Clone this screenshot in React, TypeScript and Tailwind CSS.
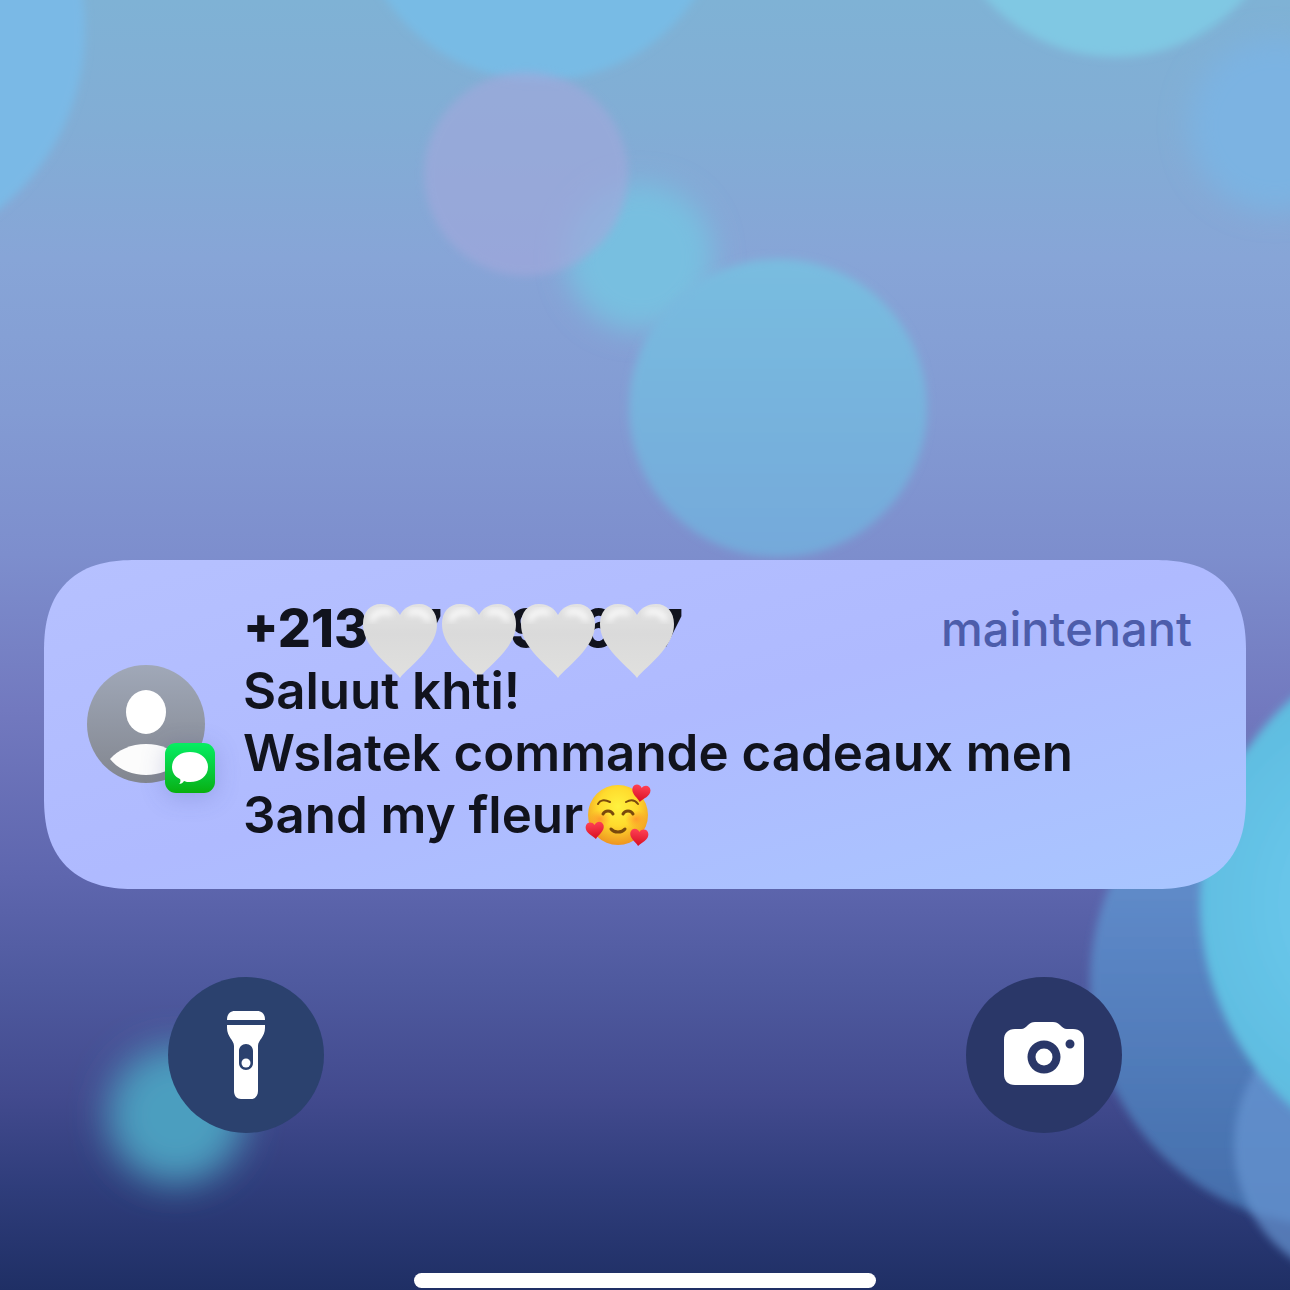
import React from 'react';

function Wallpaper() {
  return (
    <svg
      className="absolute inset-0 h-full w-full"
      viewBox="0 0 1290 1290"
      preserveAspectRatio="xMidYMid slice"
      aria-hidden="true"
    >
      <defs>
        <linearGradient id="sky" x1="0" y1="0" x2="0" y2="1">
          <stop offset="0" stopColor="#7fb2d5" />
          <stop offset="0.1" stopColor="#82add5" />
          <stop offset="0.2" stopColor="#87a5d7" />
          <stop offset="0.32" stopColor="#839bd3" />
          <stop offset="0.43" stopColor="#7d8ecd" />
          <stop offset="0.55" stopColor="#7279bf" />
          <stop offset="0.68" stopColor="#5e66ae" />
          <stop offset="0.76" stopColor="#4f5a9f" />
          <stop offset="0.85" stopColor="#424a8e" />
          <stop offset="0.92" stopColor="#2f3d7b" />
          <stop offset="1" stopColor="#1f2f65" />
        </linearGradient>
        <linearGradient id="blob" x1="0" y1="0" x2="0" y2="1">
          <stop offset="0" stopColor="#79bde0" />
          <stop offset="1" stopColor="#75a9da" />
        </linearGradient>
        <linearGradient id="deep" x1="0" y1="0" x2="0" y2="1">
          <stop offset="0" stopColor="#6b9bd4" />
          <stop offset="0.4" stopColor="#5b86c5" />
          <stop offset="1" stopColor="#436daa" />
        </linearGradient>
        <radialGradient id="aqua" cx="0.38" cy="0.5" r="0.5">
          <stop offset="0" stopColor="#69c8ed" />
          <stop offset="0.4" stopColor="#68c6ea" />
          <stop offset="1" stopColor="#5cb9dc" />
        </radialGradient>
        <filter id="soft4" x="-20%" y="-20%" width="140%" height="140%">
          <feGaussianBlur stdDeviation="4" />
        </filter>
        <filter id="soft14" x="-40%" y="-40%" width="180%" height="180%">
          <feGaussianBlur stdDeviation="14" />
        </filter>
        <filter id="soft18" x="-50%" y="-50%" width="200%" height="200%">
          <feGaussianBlur stdDeviation="18" />
        </filter>
      </defs>
      <rect width="1290" height="1290" fill="url(#sky)" />
      <circle cx="-145" cy="30" r="230" fill="#7ab9e6" filter="url(#soft4)" />
      <circle cx="540" cy="-105" r="186" fill="#78bbe5" filter="url(#soft4)" />
      <circle cx="1115" cy="-115" r="172" fill="#80c8e3" filter="url(#soft4)" />
      <circle cx="1275" cy="125" r="86" fill="#7bb3e2" filter="url(#soft14)" />
      <circle cx="640" cy="257" r="74" fill="#78bfe0" filter="url(#soft14)" />
      <circle cx="526" cy="174" r="102" fill="#a2a8dc" opacity="0.64" filter="url(#soft4)" />
      <circle cx="778" cy="408" r="149" fill="url(#blob)" filter="url(#soft4)" />
      <circle cx="1334" cy="982" r="244" fill="url(#deep)" filter="url(#soft4)" />
      <circle cx="1374" cy="1145" r="140" fill="#6796d3" opacity="0.7" filter="url(#soft4)" />
      <circle cx="1474" cy="903" r="274" fill="url(#aqua)" filter="url(#soft4)" />
      <circle cx="176" cy="1115" r="68" fill="#4b9ebf" filter="url(#soft18)" />
    </svg>
  );
}

function WhiteHeart() {
  return (
    <svg viewBox="0 0 76 76" className="h-[76px] w-[76px] shrink-0" role="img" aria-label="white heart">
      <defs>
        <linearGradient id="heart" x1="0" y1="0" x2="0" y2="1">
          <stop offset="0" stopColor="#e2e2e2" />
          <stop offset="0.4" stopColor="#dadada" />
          <stop offset="1" stopColor="#e0e0de" />
        </linearGradient>
        <filter id="glow" x="-30%" y="-60%" width="160%" height="220%">
          <feGaussianBlur stdDeviation="3" />
        </filter>
      </defs>
      <path
        d="M38 75C34 69 22 60 13 49C5 39 1 31 1 21C1 9 8 1 19 1C28 1 34 5 38 12C42 5 48 1 57 1C68 1 75 9 75 21C75 31 71 39 63 49C54 60 42 69 38 75Z"
        fill="url(#heart)"
      />
      <path d="M10 16C13 9 22 7 28 10" fill="none" stroke="#fff" strokeWidth="5" strokeLinecap="round" filter="url(#glow)" />
      <path d="M48 10C54 7 63 9 66 16" fill="none" stroke="#fff" strokeWidth="5" strokeLinecap="round" filter="url(#glow)" />
    </svg>
  );
}

function SmilingHearts() {
  const heart = 'M0 9C-3 5-10 2-9-4C-8-9-2-9 0-5C2-9 8-9 9-4C10 2 3 5 0 9Z';
  return (
    <svg
      viewBox="0 0 66 64"
      className="ml-0.5 h-16 w-[66px]"
      role="img"
      aria-label="smiling face with hearts"
    >
      <defs>
        <radialGradient id="face" cx="0.5" cy="0.36" r="0.64">
          <stop offset="0" stopColor="#fff23f" />
          <stop offset="0.5" stopColor="#ffdb2d" />
          <stop offset="1" stopColor="#ee9420" />
        </radialGradient>
        <radialGradient id="blush">
          <stop offset="0" stopColor="#ff7a2c" stopOpacity="0.6" />
          <stop offset="1" stopColor="#ff8a2c" stopOpacity="0" />
        </radialGradient>
        <linearGradient id="red" x1="0" y1="0" x2="0" y2="1">
          <stop offset="0" stopColor="#ff4054" />
          <stop offset="1" stopColor="#d80f22" />
        </linearGradient>
      </defs>
      <circle cx="33" cy="32" r="30" fill="url(#face)" />
      <ellipse cx="15" cy="36" rx="11" ry="9" fill="url(#blush)" />
      <ellipse cx="51" cy="36" rx="11" ry="9" fill="url(#blush)" />
      <g fill="none" stroke="#7a4a0c" strokeLinecap="round">
        <path d="M13 21C15 17 19 16 25 19" strokeWidth="2" />
        <path d="M41 19C46 16 50 17 53 21" strokeWidth="2" />
        <path d="M18 31C20 27 26 27 28 31" strokeWidth="3" />
        <path d="M38 31C40 27 46 27 48 31" strokeWidth="3" />
        <path d="M26 46C29 50 37 50 40 46" strokeWidth="3" />
      </g>
      <path d={heart} transform="translate(56 10) rotate(8)" fill="url(#red)" />
      <path d={heart} transform="translate(10 47) rotate(-6)" fill="url(#red)" />
      <path d={heart} transform="translate(54 54) rotate(6)" fill="url(#red)" />
    </svg>
  );
}

function Avatar() {
  return (
    <div className="relative mt-1 h-[118px] w-[118px] shrink-0">
      <svg viewBox="0 0 118 118" className="h-full w-full" aria-hidden="true">
        <defs>
          <linearGradient id="disc" x1="0" y1="0" x2="0" y2="1">
            <stop offset="0" stopColor="#a0a8b8" />
            <stop offset="1" stopColor="#82868f" />
          </linearGradient>
        </defs>
        <circle cx="59" cy="59" r="59" fill="url(#disc)" />
        <ellipse cx="59" cy="47" rx="20" ry="22" fill="#fff" />
        <path d="M23 94C31 85 44 79 59 79C74 79 87 85 95 94C87 104 74 110 59 110C44 110 31 104 23 94Z" fill="#fcfcfc" />
      </svg>
      <span className="absolute -right-[10px] -bottom-[10px] h-[50px] w-[50px] rounded-[11px] bg-linear-to-b from-[#06ee62] to-[#08b00c] shadow-[0_4px_24px_rgba(70,80,160,0.25)]">
        <svg viewBox="0 0 50 50" className="h-full w-full" role="img" aria-label="Messages">
          <path
            d="M25 9C35 9 43 15 43 24C43 33 35 39 25 39C23 39 21 39 19 38C18 40 16 41 14 41C15 40 16 38 15 36C10 34 7 29 7 24C7 15 15 9 25 9Z"
            fill="#fff"
          />
        </svg>
      </span>
    </div>
  );
}

function Notification() {
  return (
    <article className="mx-11 flex items-center gap-[38px] rounded-[80px] bg-linear-to-br from-[#b6c1ff] via-[#afbaff] to-[#a8c6ff] pt-[38px] pr-[54px] pb-[43px] pl-[43px] supports-[corner-shape:squircle]:rounded-[92px] supports-[corner-shape:squircle]:[corner-shape:superellipse(1.3)]">
      <Avatar />
      <div className="min-w-0 flex-1 text-[51px] leading-[62px] font-semibold text-[#11131d]">
        <header className="flex justify-between">
          <h1 className="relative flex text-[52px] font-extrabold">
            <span>+213</span>
            <span className="flex text-right" aria-hidden="true">
              <span className="w-[74px]">7</span>
              <span className="w-[102px]">9</span>
              <span className="w-[71px]">6</span>
              <span className="w-[68px]">7</span>
            </span>
            <span className="absolute top-[5px] left-[119px] flex gap-[3px]">
              <WhiteHeart />
              <WhiteHeart />
              <WhiteHeart />
              <WhiteHeart />
            </span>
          </h1>
          <time className="text-[47px] font-medium text-[#4d5dab]">maintenant</time>
        </header>
        <p className="relative">Saluut khti!</p>
        <p>
          Wslatek commande cadeaux men
          <br />
          <span className="flex h-[62px] items-center">
            3and my fleur
            <SmilingHearts />
          </span>
        </p>
      </div>
    </article>
  );
}

function TorchIcon() {
  return (
    <svg viewBox="0 0 38 88" className="h-[88px] w-[38px]" aria-hidden="true">
      <path d="M0 9C0 3 3 0 8 0H30C35 0 38 3 38 9Z" fill="#fff" />
      <path
        fillRule="evenodd"
        d="M0 14H38V17C38 26 31 29 31 35V80C31 85 28 88 24 88H14C10 88 7 85 7 80V35C7 29 0 26 0 17ZM19 33C15 33 12 36 12 40V52C12 56 15 59 19 59C23 59 26 56 26 52V40C26 36 23 33 19 33Z"
        fill="#fff"
      />
      <circle cx="19" cy="52" r="4.500" fill="#fff" />
    </svg>
  );
}

function CameraIcon() {
  return (
    <svg viewBox="0 0 80 63" className="mb-1 h-[63px] w-20" aria-hidden="true">
      <path
        fillRule="evenodd"
        d="M11 7H17C20 7 22 5 24 3C26 1 28 0 31 0H49C52 0 54 1 56 3C58 5 60 7 63 7H69C76 7 80 11 80 18V52C80 59 76 63 69 63H11C4 63 0 59 0 52V18C0 11 4 7 11 7ZM40 18.500A16.500 16.500 0 1 0 40 51.500A16.500 16.500 0 1 0 40 18.500ZM66 17.500A4.500 4.500 0 1 0 66 26.500A4.500 4.500 0 1 0 66 17.500Z"
        fill="#fff"
      />
      <circle cx="40" cy="35" r="8.500" fill="#fff" />
    </svg>
  );
}

export default function App() {
  return (
    <main className="relative flex min-h-screen flex-col justify-end overflow-hidden bg-[#5e66ae] font-['Inter',sans-serif]">
      <Wallpaper />
      <div className="relative">
        <Notification />
        <nav className="mt-[88px] flex justify-between px-[168px]">
          <button
            type="button"
            aria-label="Lampe torche"
            className="flex h-[156px] w-[156px] items-center justify-center rounded-full bg-[#2b416e]"
          >
            <TorchIcon />
          </button>
          <button
            type="button"
            aria-label="Appareil photo"
            className="flex h-[156px] w-[156px] items-center justify-center rounded-full bg-[#2a3768]"
          >
            <CameraIcon />
          </button>
        </nav>
        <div className="mx-auto mt-[140px] mb-0.5 h-[15px] w-[462px] rounded-full bg-white" />
      </div>
    </main>
  );
}
